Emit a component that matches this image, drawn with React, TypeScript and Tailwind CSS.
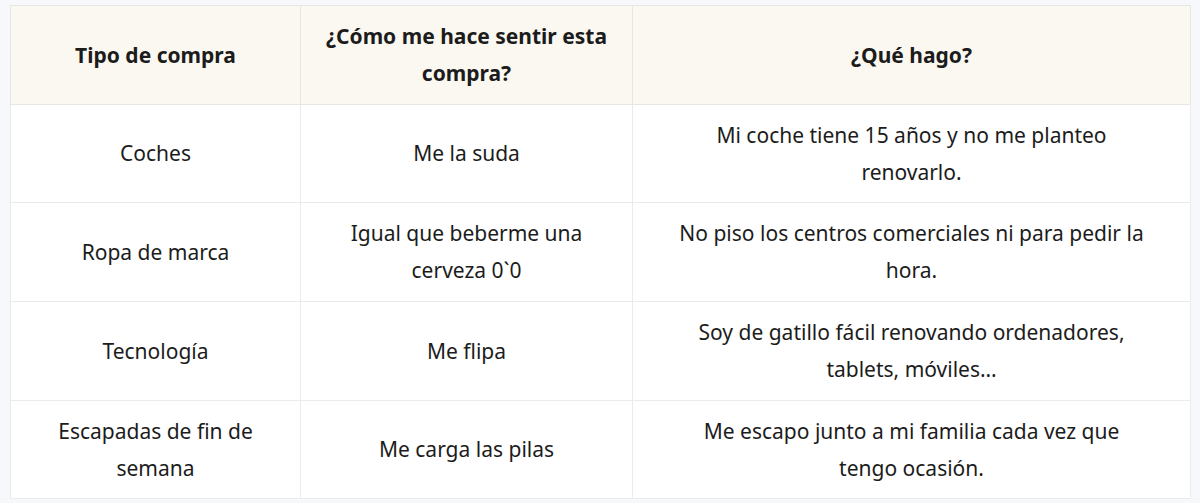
import React from "react";

const rows: { a: React.ReactNode; b: React.ReactNode; c: React.ReactNode; h: string }[] = [
  {
    a: "Coches",
    b: "Me la suda",
    c: (
      <>
        Mi coche tiene 15 años y no me planteo
        <br />
        renovarlo.
      </>
    ),
    h: "h-[98px]",
  },
  {
    a: "Ropa de marca",
    b: (
      <>
        Igual que beberme una
        <br />
        cerveza 0`0
      </>
    ),
    c: (
      <>
        No piso los centros comerciales ni para pedir la
        <br />
        hora.
      </>
    ),
    h: "h-[99px]",
  },
  {
    a: "Tecnología",
    b: "Me flipa",
    c: (
      <>
        Soy de gatillo fácil renovando ordenadores,
        <br />
        tablets, móviles…
      </>
    ),
    h: "h-[99px]",
  },
  {
    a: (
      <>
        Escapadas de fin de
        <br />
        semana
      </>
    ),
    b: "Me carga las pilas",
    c: (
      <>
        Me escapo junto a mi familia cada vez que
        <br />
        tengo ocasión.
      </>
    ),
    h: "h-[98px]",
  },
];

export default function App() {
  return (
    <div
      className="w-[1200px] h-[503px] bg-[#f6f8fc] pl-[10px] pt-[5px] text-[#1c1c1c]"
      style={{ fontFamily: '"Noto Sans", "Open Sans", sans-serif' }}
    >
      <table className="w-[1180px] border-collapse border border-[#e4e4e4] bg-white text-center text-[21px] leading-[37px] table-fixed">
        <colgroup>
          <col className="w-[290px]" />
          <col className="w-[332px]" />
          <col className="w-[558px]" />
        </colgroup>
        <thead>
          <tr className="h-[99px] bg-[#fbf8f1]">
            <th className="border border-[#e8e6e0] px-2 font-bold">Tipo de compra</th>
            <th className="border border-[#e8e6e0] px-2 font-bold">
              ¿Cómo me hace sentir esta
              <br />
              compra?
            </th>
            <th className="border border-[#e8e6e0] px-2 font-bold">¿Qué hago?</th>
          </tr>
        </thead>
        <tbody>
          {rows.map((r, i) => (
            <tr key={i} className={r.h}>
              <td className="border border-[#ebebeb] px-2 font-normal">{r.a}</td>
              <td className="border border-[#ebebeb] px-2 font-normal">{r.b}</td>
              <td className="border border-[#ebebeb] px-2 font-normal">{r.c}</td>
            </tr>
          ))}
        </tbody>
      </table>
    </div>
  );
}
